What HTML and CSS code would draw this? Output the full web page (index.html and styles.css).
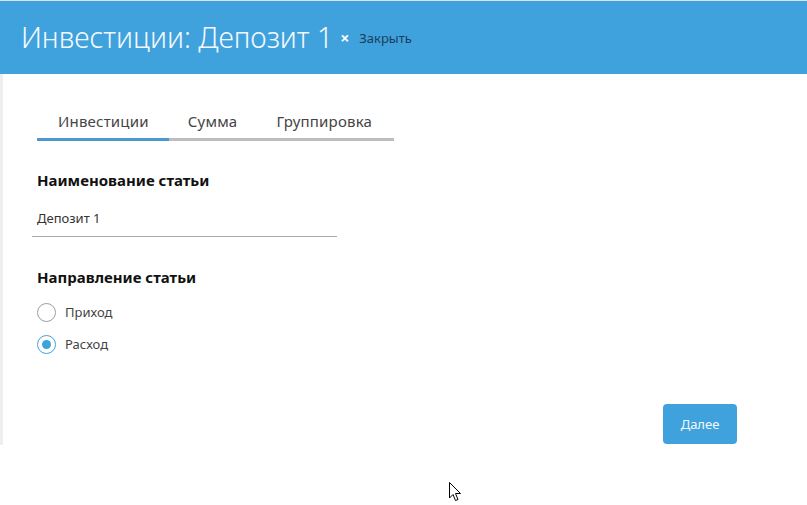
FILE: index.html
```html
<!DOCTYPE html>
<html lang="ru">
<head>
<meta charset="utf-8">
<title>Инвестиции: Депозит 1</title>
<link rel="stylesheet" href="styles.css">
</head>
<body>
<div class="page">
  <header class="header">
    <h1 class="title">Инвестиции: Депозит 1</h1>
    <span class="close-x">×</span>
    <span class="close-label">Закрыть</span>
  </header>
  <div class="body">
    <div class="side-strip"></div>
    <main class="content">
      <nav class="tabs">
        <div class="tab active">Инвестиции</div>
        <div class="tab mid">Сумма</div>
        <div class="tab">Группировка</div>
      </nav>
      <section class="field">
        <div class="label">Наименование статьи</div>
        <div class="input">Депозит 1</div>
      </section>
      <section class="field dir">
        <div class="label">Направление статьи</div>
        <div class="radios">
          <label class="radio"><span class="circle"></span><span>Приход</span></label>
          <label class="radio checked"><span class="circle"></span><span>Расход</span></label>
        </div>
      </section>
      <div class="actions">
        <button class="btn">Далее</button>
      </div>
    </main>
  </div>
  <svg class="cursor" width="13" height="20" viewBox="0 0 13 20"><path d="M0.5 0.5 L0.5 16 L4 12.5 L6.5 18.5 L9 17.5 L6.5 11.5 L11.5 11.5 Z" fill="#fff" stroke="#000" stroke-width="1" stroke-linejoin="round"/></svg>
</div>
</body>
</html>
```
FILE: styles.css
```css
* { box-sizing: border-box; }
html, body { margin: 0; padding: 0; background: #fff; }
body { font-family: "Noto Sans", "Open Sans", sans-serif; color: #333; }
.page { position: relative; width: 807px; height: 505px; overflow: hidden; border-top: 1px solid #d6e4ec; }
.header {
  height: 73px; background: #3fa2dd; display: flex; align-items: center;
  padding-left: 21px; padding-bottom: 1px;
}
.title { margin: 0; font-weight: 300; font-size: 28.4px; color: #f4f9fd; line-height: 1; }
.close-x { color: #f4f9fd; font-size: 16px; font-weight: 700; margin-left: 7px; margin-top: 2px; }
.close-label { color: #1d3d5c; font-size: 13px; margin-left: 10px; margin-top: 2px; }
.body { display: flex; height: 431px; }
.side-strip { width: 3px; height: 371px; background: #eeeeee; }
.content { flex: 1; padding-left: 34px; display: flex; flex-direction: column; }
.tabs { display: flex; margin-top: 37px; width: 357px; border-bottom: 3px solid #bdbdbd; }
.tab { font-size: 15px; font-weight: 400; color: #444; padding: 0 20px 7px 21px; line-height: 20px; margin-bottom: -3px; border-bottom: 3px solid transparent; letter-spacing: 0.2px; }
.tab.mid { padding-left: 19px; padding-right: 18px; }
.tab.active { border-bottom-color: #4a9ad0; }
.field { margin-top: 29px; }
.label { font-size: 15px; font-weight: 700; color: #111; line-height: 20px; }
.input { margin-top: 18px; margin-left: -5px; width: 305px; padding: 0 5px 8px; font-size: 13px; color: #333; border-bottom: 1px solid #aaa; line-height: 20px; }
.dir { margin-top: 30px; }
.radios { margin-top: 15px; display: flex; flex-direction: column; gap: 12px; }
.radio { display: flex; align-items: center; font-size: 13px; color: #444; line-height: 20px; }
.circle { width: 19px; height: 19px; border-radius: 50%; border: 1px solid #9e9e9e; margin-right: 9px; position: relative; background: #fff; }
.radio.checked .circle { border-color: #3fa2dd; }
.radio.checked .circle::after { content: ""; position: absolute; left: 4px; top: 4px; width: 9px; height: 9px; border-radius: 50%; background: #3fa2dd; }
.actions { display: flex; justify-content: flex-end; padding-right: 70px; margin-top: 50px; }
.btn { width: 74px; height: 40px; border: none; border-radius: 4px; background: #3fa2dd; color: #f4f9fd; font-family: inherit; font-size: 13px; }
.cursor { position: absolute; left: 449px; top: 481px; }
```
